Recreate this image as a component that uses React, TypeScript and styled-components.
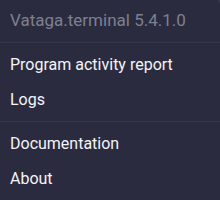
import React from 'react';
import styled, { createGlobalStyle } from 'styled-components';

const GlobalStyle = createGlobalStyle`
  html, body {
    margin: 0;
    padding: 0;
    background: #3a3a4c;
  }
  body {
    font-family: Roboto, "Liberation Sans", sans-serif;
  }
`;

const Menu = styled.div`
  width: 220px;
  height: 201px;
  margin-top: -1px;
  background: #2b2b3f;
  border-top-right-radius: 6px;
  overflow: hidden;
`;

const Group = styled.div`
  padding: 4px 0;
`;

const Divider = styled.div`
  height: 1px;
  background: #36364a;
`;

const Item = styled.div<{ $muted?: boolean }>`
  height: 35px;
  line-height: 35px;
  padding: 0 10px;
  font-size: ${p => (p.$muted ? '17px' : '16px')};
  white-space: nowrap;
  color: ${p => (p.$muted ? '#7e808e' : '#f4f4f8')};
  cursor: ${p => (p.$muted ? 'default' : 'pointer')};
`;

const App: React.FC = () => {
  return (
    <>
      <GlobalStyle />
      <Menu>
        <Group>
          <Item $muted>Vataga.terminal 5.4.1.0</Item>
        </Group>
        <Divider />
        <Group>
          <Item>Program activity report</Item>
          <Item>Logs</Item>
        </Group>
        <Divider />
        <Group>
          <Item>Documentation</Item>
          <Item>About</Item>
        </Group>
      </Menu>
    </>
  );
};

export default App;
